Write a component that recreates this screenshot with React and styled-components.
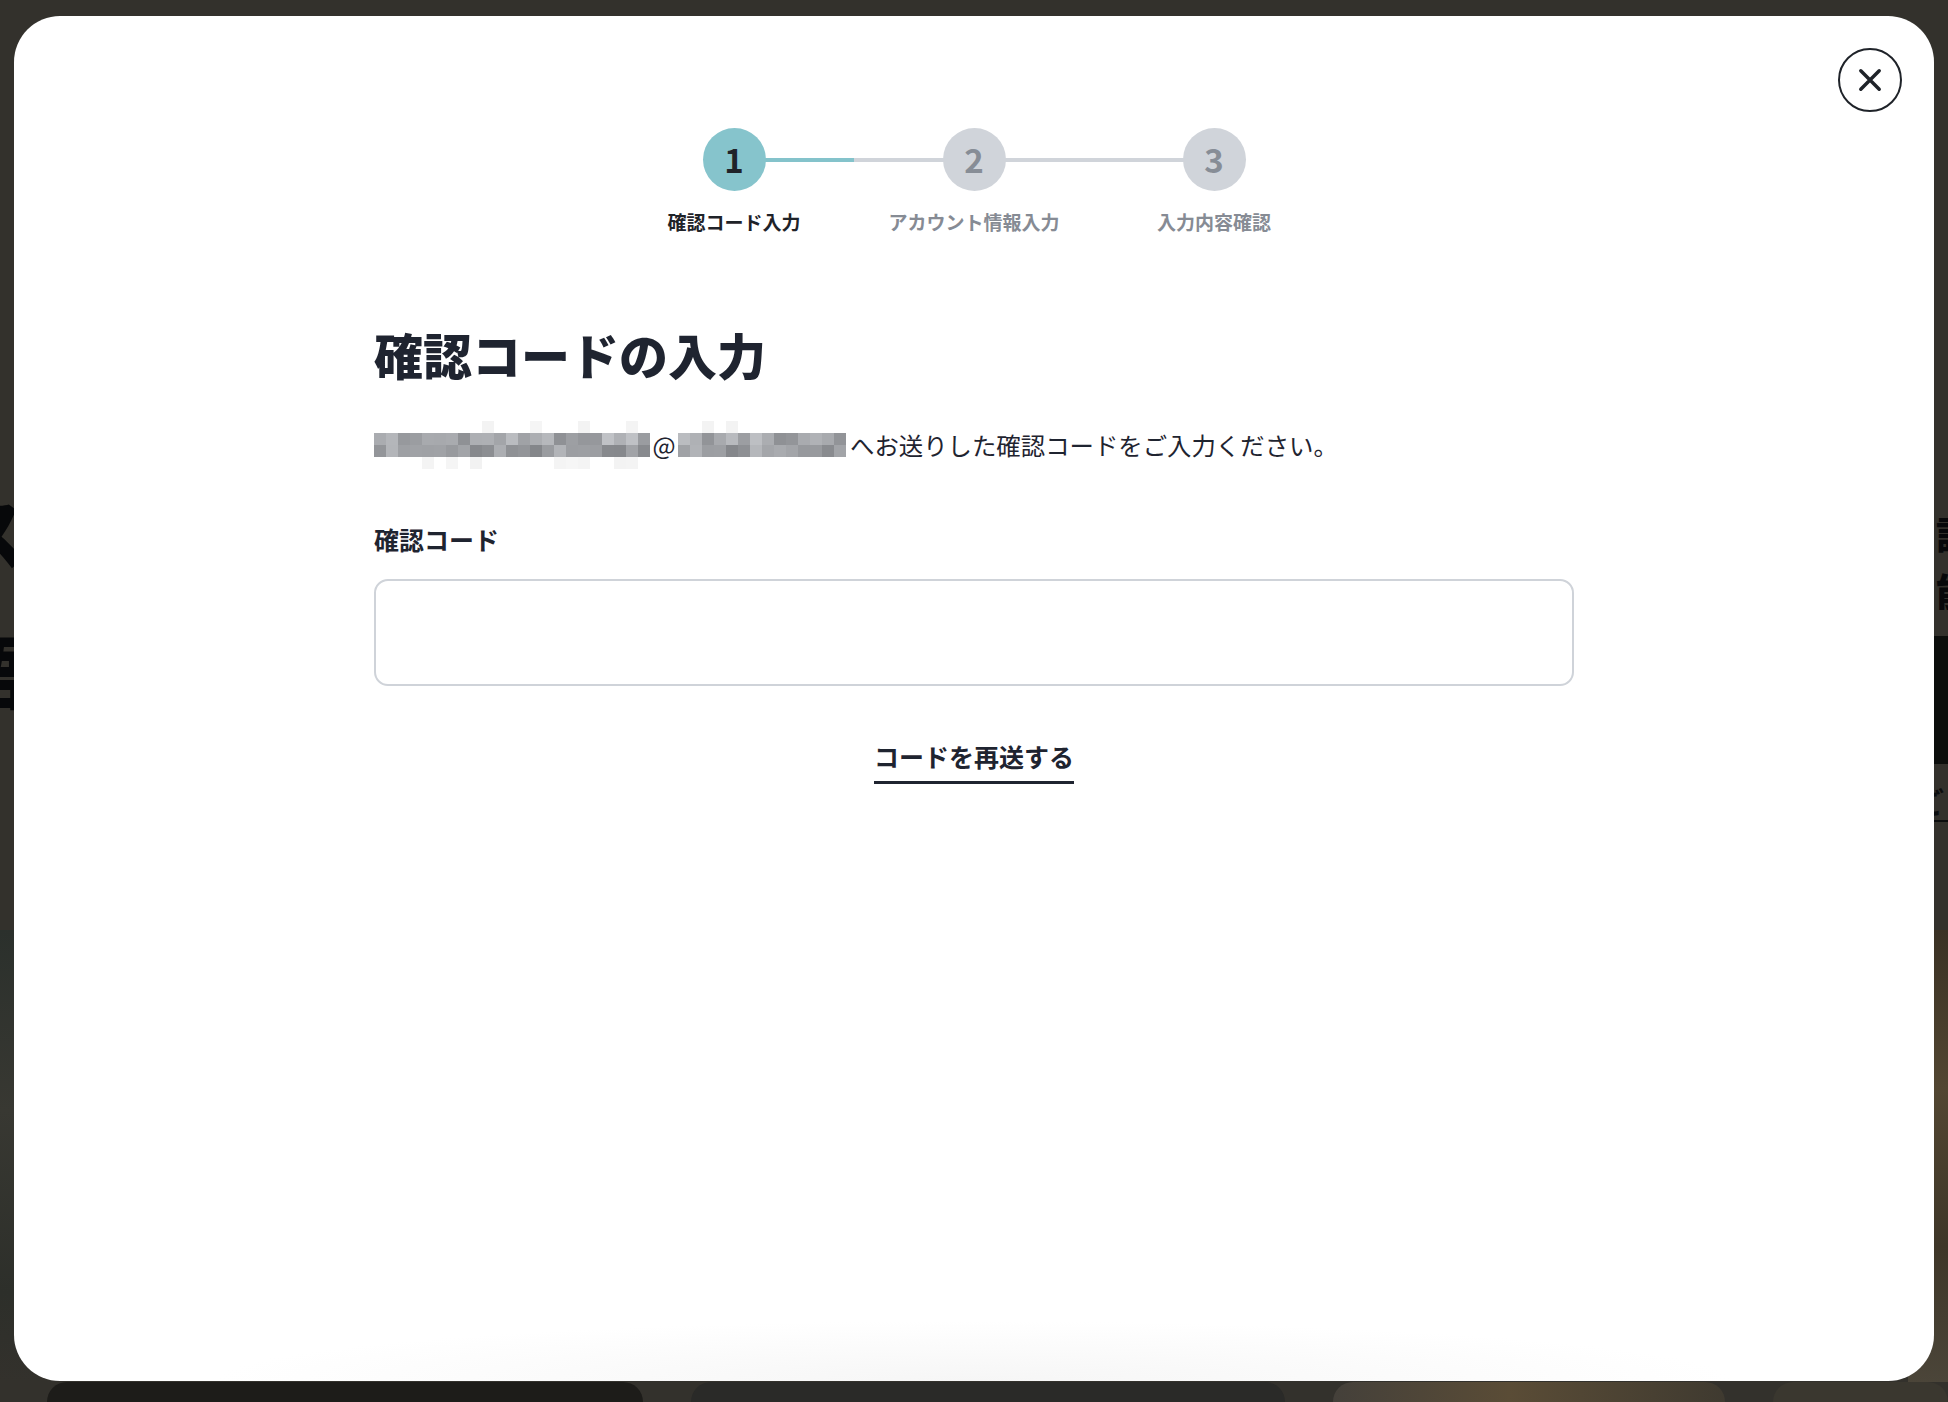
import React from "react";
import styled, { createGlobalStyle } from "styled-components";

const GlobalStyle = createGlobalStyle`
  html, body {
    margin: 0;
    padding: 0;
    background: #33312c;
  }
  body {
    font-family: "Noto Sans CJK JP", "Noto Sans", sans-serif;
    color: #1f2430;
  }
  * {
    box-sizing: border-box;
  }
`;

const steps = [
  { num: 1, label: "確認コード入力" },
  { num: 2, label: "アカウント情報入力" },
  { num: 3, label: "入力内容確認" },
];

// mosaic shades for the hidden e-mail address
const shade = (i, row) => {
  const v = Math.abs(Math.sin(i * 12.9898 + row * 78.233) * 43758.5453) % 1;
  if (row === 0 || row === 3) {
    const l = v > 0.7 ? Math.round(232 + v * 14) : 255;
    return `rgb(${l},${l},${l})`;
  }
  const base = row === 1 ? 168 : 156;
  const l = Math.round(base + (v - 0.5) * 52);
  return `rgb(${l},${l + 2},${l + 6})`;
};

function Mosaic({ cols, seed }) {
  return (
    <MosaicGrid $cols={cols}>
      {[0, 1, 2, 3].map((row) =>
        Array.from({ length: cols }).map((_, i) => (
          <Cell key={row + "-" + i} style={{ background: shade(i + seed, row) }} />
        ))
      )}
    </MosaicGrid>
  );
}

function Stepper() {
  return (
    <StepRow>
      {steps.map((s, i) => (
        <Step key={s.num}>
          <CircleWrap>
            {i > 0 && <Half $side="left" $active={false} />}
            {i < steps.length - 1 && <Half $side="right" $active={i === 0} />}
            <Circle $active={i === 0}>{s.num}</Circle>
          </CircleWrap>
          <StepLabel $active={i === 0}>{s.label}</StepLabel>
        </Step>
      ))}
    </StepRow>
  );
}

function App() {
  return (
    <>
      <GlobalStyle />
      <Page>
        <Behind>
          <TopSpace />
          <MidBand>
            <EdgeLeft>
              <BigGlyph>ス</BigGlyph>
              <BigGlyph>語</BigGlyph>
              <SmallGlyph>コ</SmallGlyph>
              <SmallGlyph>ー</SmallGlyph>
            </EdgeLeft>
            <EdgeRight>
              <MidGlyph>詳</MidGlyph>
              <MidGlyph>能</MidGlyph>
              <DarkBlock />
              <UnderGlyph>ご</UnderGlyph>
            </EdgeRight>
          </MidBand>
          <ImageBand>
            <GreenImage />
            <BrownImage />
          </ImageBand>
          <CardRow>
            <BackCard $bg="#1d1c19" />
            <BackCard $bg="#2a2a28" />
            <BackCard $bg="linear-gradient(90deg,#44403a,#5a4c36 45%,#3f3a30)" />
            <BackCard $bg="#3a372f" />
          </CardRow>
        </Behind>

        <Overlay>
          <Modal>
            <CloseButton aria-label="close">
              <svg width="26" height="26" viewBox="0 0 24 24" fill="none">
                <path d="M3.5 3.5 L20.5 20.5 M20.5 3.5 L3.5 20.5" stroke="#1f2329" strokeWidth="3.2" strokeLinecap="round" />
              </svg>
            </CloseButton>

            <Stepper />

            <Content>
              <Title>確認コードの入力</Title>
              <Description>
                <Mosaic cols={23} seed={3} />
                <At>@</At>
                <Mosaic cols={14} seed={41} />
                <Tail>へお送りした確認コードをご入力ください。</Tail>
              </Description>

              <FieldLabel>確認コード</FieldLabel>
              <CodeInput type="text" />

              <ResendRow>
                <ResendLink>コードを再送する</ResendLink>
              </ResendRow>
            </Content>
          </Modal>
        </Overlay>
      </Page>
    </>
  );
}

export default App;

const Page = styled.div`
  position: relative;
  width: 1948px;
  height: 1402px;
  overflow: hidden;
  background: #33312c;
`;

const Behind = styled.div`
  display: flex;
  flex-direction: column;
  height: 100%;
`;

const TopSpace = styled.div`
  height: 461px;
`;

const MidBand = styled.div`
  height: 469px;
  display: flex;
  justify-content: space-between;
`;

const EdgeLeft = styled.div`
  display: flex;
  flex-direction: column;
  margin-left: -50px;
`;

const EdgeRight = styled.div`
  display: flex;
  flex-direction: column;
  align-items: flex-end;
  padding-top: 43px;
  margin-right: -26px;
`;

const BigGlyph = styled.div`
  font-size: 78px;
  font-weight: 900;
  line-height: 139px;
  color: #07080a;
`;

const SmallGlyph = styled.div`
  font-size: 32px;
  font-weight: 700;
  line-height: 46px;
  color: #0c0d0e;
`;

const MidGlyph = styled.div`
  font-size: 38px;
  font-weight: 900;
  line-height: 57px;
  color: #07080a;
`;

const DarkBlock = styled.div`
  margin-top: 18px;
  width: 60px;
  height: 128px;
  background: #0c0e0c;
`;

const UnderGlyph = styled.div`
  margin-top: 18px;
  font-size: 30px;
  font-weight: 700;
  line-height: 38px;
  color: #0c0d0e;
  width: 60px;
  border-bottom: 2px solid #0c0d0e;
`;

const ImageBand = styled.div`
  flex: 1;
  display: flex;
  justify-content: space-between;
`;

const GreenImage = styled.div`
  width: 40px;
  background: linear-gradient(180deg, #2b302c, #383832 40%, #2d2f2a 80%, #33312c);
`;

const BrownImage = styled.div`
  width: 40px;
  background: linear-gradient(180deg, #3a3124, #524632 35%, #3e3628 70%, #4b4539);
`;

const CardRow = styled.div`
  height: 20px;
  display: grid;
  grid-template-columns: 596px 594px 392px 1fr;
  gap: 48px;
  padding-left: 47px;
`;

const BackCard = styled.div`
  background: ${(p) => p.$bg};
  border-radius: 40px 40px 0 0;
`;

const Overlay = styled.div`
  position: absolute;
  inset: 0;
  display: flex;
  padding: 16px 14px 21px 14px;
`;

const Modal = styled.div`
  position: relative;
  flex: 1;
  display: flex;
  flex-direction: column;
  align-items: center;
  padding-top: 112px;
  border-radius: 46px;
  background: radial-gradient(ellipse 760px 60px at 50% 100%, #f6f6f6, #ffffff);
`;

const CloseButton = styled.button`
  position: absolute;
  top: 32px;
  right: 32px;
  width: 64px;
  height: 64px;
  border-radius: 50%;
  border: 2px solid #1f2329;
  background: #ffffff;
  display: flex;
  align-items: center;
  justify-content: center;
  padding: 0;
  cursor: pointer;
`;

const StepRow = styled.div`
  display: flex;
`;

const Step = styled.div`
  width: 240px;
  display: flex;
  flex-direction: column;
  align-items: center;
`;

const CircleWrap = styled.div`
  position: relative;
  width: 100%;
  display: flex;
  justify-content: center;
`;

const Half = styled.div`
  position: absolute;
  top: 30px;
  height: 4px;
  width: 50%;
  ${(p) => (p.$side === "left" ? "left: 0;" : "right: 0;")}
  background: ${(p) => (p.$active ? "#84c3cb" : "#d0d4da")};
`;

const Circle = styled.div`
  position: relative;
  width: 63px;
  height: 63px;
  border-radius: 50%;
  background: ${(p) => (p.$active ? "#86c4cc" : "#d0d4da")};
  color: ${(p) => (p.$active ? "#1f2329" : "#878d96")};
  display: flex;
  align-items: center;
  justify-content: center;
  font-size: 33px;
  font-weight: 700;
  line-height: 1;
`;

const StepLabel = styled.div`
  margin-top: 17px;
  font-size: 19px;
  line-height: 28px;
  font-weight: 700;
  white-space: nowrap;
  color: ${(p) => (p.$active ? "#1f2329" : "#868b94")};
`;

const Content = styled.div`
  width: 1200px;
  display: flex;
  flex-direction: column;
`;

const Title = styled.h1`
  margin: 84px 0 0 0;
  font-size: 49px;
  line-height: 67px;
  font-weight: 800;
  color: #1f2430;
`;

const Description = styled.p`
  margin: 40px 0 0 0;
  font-size: 24.4px;
  line-height: 36px;
  color: #1f2430;
  display: flex;
  align-items: center;
  white-space: nowrap;
`;

const MosaicGrid = styled.span`
  display: inline-grid;
  grid-template-columns: repeat(${(p) => p.$cols}, 12px);
  grid-auto-rows: 12px;
  margin: -6px 0;
`;

const Cell = styled.span`
  display: block;
`;

const At = styled.span`
  display: inline-block;
  width: 28px;
  text-align: center;
`;

const Tail = styled.span`
  margin-left: 4px;
`;

const FieldLabel = styled.div`
  margin-top: 59px;
  font-size: 25px;
  line-height: 34px;
  font-weight: 700;
  color: #1f2430;
`;

const CodeInput = styled.input`
  margin-top: 23px;
  height: 107px;
  width: 100%;
  border: 2px solid #cfd3d9;
  border-radius: 14px;
  background: #ffffff;
  font-size: 28px;
  padding: 0 24px;
  outline: none;
`;

const ResendRow = styled.div`
  margin-top: 53px;
  display: flex;
  justify-content: center;
`;

const ResendLink = styled.a`
  font-size: 25px;
  line-height: 34px;
  font-weight: 700;
  color: #1f2430;
  padding-bottom: 8px;
  border-bottom: 3px solid #1f2430;
  cursor: pointer;
`;
